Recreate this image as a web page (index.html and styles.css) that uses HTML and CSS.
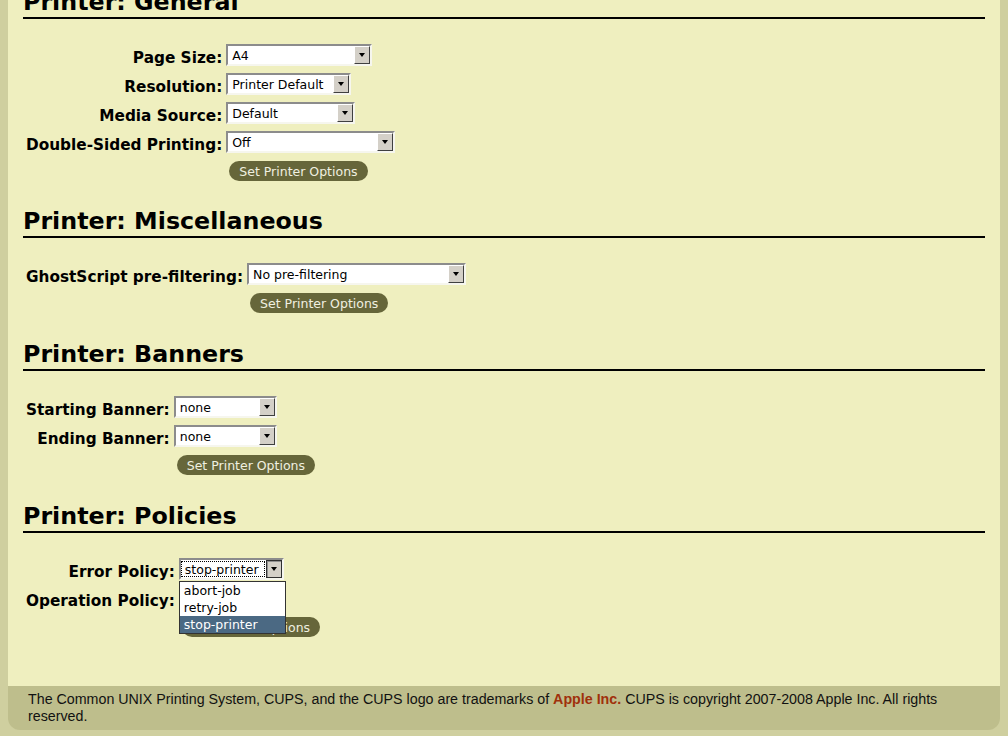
FILE: index.html
```html
<!DOCTYPE html>
<html>
<head>
<meta charset="utf-8">
<title>CUPS - Set Printer Options</title>
<link rel="stylesheet" href="styles.css">
</head>
<body>
<div class="page">
  <main class="content">
    <section class="section">
      <h2 class="title">Printer: General</h2>
      <form class="opts">
        <label class="lbl">Page Size:</label>
        <div class="sel w-pagesize"><span class="val">A4</span><span class="arrow"></span></div>
        <label class="lbl">Resolution:</label>
        <div class="sel w-resolution"><span class="val">Printer Default</span><span class="arrow"></span></div>
        <label class="lbl">Media Source:</label>
        <div class="sel w-media"><span class="val">Default</span><span class="arrow"></span></div>
        <label class="lbl">Double-Sided Printing:</label>
        <div class="sel w-duplex"><span class="val">Off</span><span class="arrow"></span></div>
        <button type="button" class="submit">Set Printer Options</button>
      </form>
    </section>

    <section class="section">
      <h2 class="title">Printer: Miscellaneous</h2>
      <form class="opts">
        <label class="lbl">GhostScript pre-filtering:</label>
        <div class="sel w-ghost"><span class="val">No pre-filtering</span><span class="arrow"></span></div>
        <button type="button" class="submit">Set Printer Options</button>
      </form>
    </section>

    <section class="section">
      <h2 class="title">Printer: Banners</h2>
      <form class="opts">
        <label class="lbl">Starting Banner:</label>
        <div class="sel w-banner"><span class="val">none</span><span class="arrow"></span></div>
        <label class="lbl">Ending Banner:</label>
        <div class="sel w-banner"><span class="val">none</span><span class="arrow"></span></div>
        <button type="button" class="submit">Set Printer Options</button>
      </form>
    </section>

    <section class="section">
      <h2 class="title">Printer: Policies</h2>
      <form class="opts">
        <label class="lbl">Error Policy:</label>
        <div class="sel w-error">
          <span class="val focus">stop-printer</span><span class="arrow pressed"></span>
          <ul class="list">
            <li class="opt">abort-job</li>
            <li class="opt">retry-job</li>
            <li class="opt on">stop-printer</li>
          </ul>
        </div>
        <label class="lbl">Operation Policy:</label>
        <div class="sel w-oppolicy"><span class="val">default</span><span class="arrow"></span></div>
        <button type="button" class="submit">Set Printer Options</button>
      </form>
    </section>
  </main>
  <footer class="footer">The Common UNIX Printing System, CUPS, and the CUPS logo are trademarks of <a class="apple" href="#">Apple Inc.</a> CUPS is copyright 2007-2008 Apple Inc. All rights reserved.</footer>
</div>
</body>
</html>
```

FILE: styles.css
```css
* { box-sizing: border-box; }
html, body { margin: 0; padding: 0; }
body {
  background: #cfcf9f;
  font-family: "DejaVu Sans", "Noto Sans", sans-serif;
  color: #000;
  height: 736px;
  overflow: hidden;
}
.page { margin: -12px 8px 0; }
.content {
  background: #efefbf;
  padding: 0 15px 49px;
}
.section { display: flex; flex-direction: column; }
.section + .section { margin-top: 26px; }
.section + .section + .section { margin-top: 27px; }
.title {
  margin: 0;
  font-size: 23.75px;
  font-weight: bold;
  line-height: 28px;
  padding-bottom: 1px;
  border-bottom: 2px solid #000;
}
.opts {
  display: grid;
  grid-template-columns: max-content max-content;
  justify-content: start;
  column-gap: 4px;
  row-gap: 7px;
  padding: 25px 0 0 3px;
  margin: 0;
}
.lbl {
  font-size: 15.3px;
  font-weight: bold;
  text-align: right;
  align-self: end;
  line-height: 18px;
  margin-bottom: -1px;
}
.sel {
  position: relative;
  display: flex;
  height: 22px;
  background: #fff;
  border: 2px solid;
  border-color: #8c8c8c #f6f6ee #f6f6ee #8c8c8c;
  font-size: 12.5px;
}
.w-pagesize { width: 146px; }
.w-resolution { width: 125px; }
.w-media { width: 129px; }
.w-duplex { width: 169px; }
.w-ghost { width: 219px; }
.w-banner { width: 103px; }
.w-error { width: 105px; }
.w-oppolicy { width: 100px; }
.val {
  flex: 1;
  padding-left: 4px;
  align-self: center;
  white-space: nowrap;
  overflow: hidden;
}
.val.focus {
  align-self: stretch;
  margin: 1px 1px 1px 0;
  padding-left: 3px;
  border: 1px dotted #000;
  display: flex;
  align-items: center;
}
.arrow {
  width: 16px;
  background: #d4d0c8;
  border: 1px solid;
  border-color: #fff #404040 #404040 #fff;
  display: flex;
  align-items: center;
  justify-content: center;
}
.arrow::before {
  content: "";
  border-left: 3.5px solid transparent;
  border-right: 3.5px solid transparent;
  border-top: 4px solid #000;
}
.arrow.pressed {
  border-color: #303030;
  box-shadow: inset 1px 1px 0 #909090;
}
.list {
  position: absolute;
  top: 21px;
  left: -2px;
  width: 107px;
  margin: 0;
  padding: 0;
  list-style: none;
  background: #fff;
  border: 1px solid #333;
  z-index: 2;
}
.opt {
  height: 17px;
  line-height: 17px;
  padding-left: 4px;
  white-space: nowrap;
}
.opt.on { background: #4b6983; color: #fff; }
.submit {
  grid-column: 2;
  justify-self: start;
  margin: 1px 0 0 3px;
  height: 20px;
  padding: 0 10px;
  border: 0;
  border-radius: 10px;
  background: #66663a;
  color: #f0f0e0;
  font: 12.5px "DejaVu Sans", sans-serif;
  white-space: nowrap;
}
.footer {
  background: #bebe8c;
  border-radius: 0 0 12px 12px;
  padding: 5px 20px;
  font-family: "Liberation Sans", sans-serif;
  font-size: 14.25px;
  line-height: 17px;
  color: #111;
}
.apple { color: #a0300b; font-weight: bold; text-decoration: none; }
```
